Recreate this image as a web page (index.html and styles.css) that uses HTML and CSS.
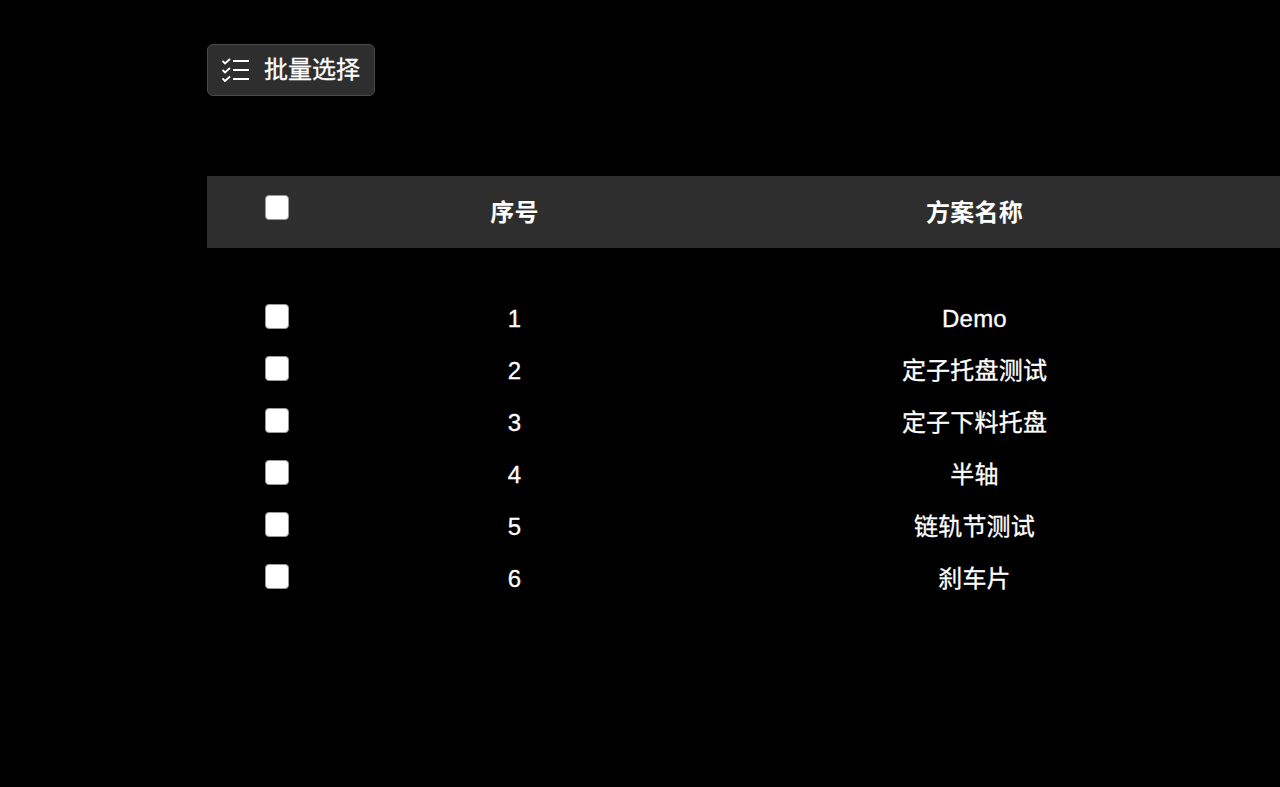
FILE: index.html
```html
<!DOCTYPE html>
<html lang="zh-CN">

<head>
    <meta charset="UTF-8">
    <title>方案列表</title>
    <link rel="stylesheet" href="styles.css">
</head>

<body>
    <main class="page">
        <button class="batch-btn">
            <svg class="batch-icon" width="28" height="24" viewBox="0 0 28 24" fill="none" stroke="#fff">
                <path d="M.5 3l2.5 2.5L8 1" stroke-width="1.9" />
                <path d="M.5 12l2.5 2.5L8 10" stroke-width="1.9" />
                <path d="M.5 20.5l2.5 2.5L8 18.5" stroke-width="1.9" />
                <path d="M11 3h16M11 12h16M11 21h16" stroke-width="2" />
            </svg>
            <span class="batch-label">批量选择</span>
        </button>

        <section class="plans">
            <div class="row head">
                <span class="check"></span>
                <span class="cell">序号</span>
                <span class="cell">方案名称</span>
            </div>
            <div class="row">
                <span class="check"></span>
                <span class="cell">1</span>
                <span class="cell">Demo</span>
            </div>
            <div class="row">
                <span class="check"></span>
                <span class="cell">2</span>
                <span class="cell">定子托盘测试</span>
            </div>
            <div class="row">
                <span class="check"></span>
                <span class="cell">3</span>
                <span class="cell">定子下料托盘</span>
            </div>
            <div class="row">
                <span class="check"></span>
                <span class="cell">4</span>
                <span class="cell">半轴</span>
            </div>
            <div class="row">
                <span class="check"></span>
                <span class="cell">5</span>
                <span class="cell">链轨节测试</span>
            </div>
            <div class="row">
                <span class="check"></span>
                <span class="cell">6</span>
                <span class="cell">刹车片</span>
            </div>
        </section>
    </main>
</body>

</html>
```

FILE: styles.css
```css
html,
body {
    margin: 0;
    height: 100%;
    background-color: #000;
    overflow: hidden;
}

body {
    color: #fff;
    font-family: "Liberation Sans", "Noto Sans CJK SC", sans-serif;
    font-size: 24px;
    -webkit-text-stroke: .3px #fff;
}

.page {
    padding: 44px 0 0 207px;
}

.batch-btn {
    display: flex;
    align-items: center;
    gap: 14px;
    box-sizing: border-box;
    width: 168px;
    height: 52px;
    padding: 0 0 0 14px;
    background-color: #2e2e2e;
    border: 1px solid #4a4a4a;
    border-radius: 6px;
    color: #fff;
    font: inherit;
}

.batch-label {
    margin-top: -6px;
}

.plans {
    margin-top: 80px;
    width: 1073px;
}

.row {
    display: grid;
    grid-template-columns: 140px 334px 586px 13px;
    align-items: center;
    justify-items: center;
    height: 52px;
    line-height: 52px;
}

.cell {
    padding: 1px 0 0 1px;
    letter-spacing: .2px;
}

.head {
    height: 72px;
    margin-bottom: 44px;
    background-color: #2e2e2e;
    font-weight: bold;
    -webkit-text-stroke: 0;
}

.check {
    box-sizing: border-box;
    width: 24px;
    height: 25px;
    margin-top: -4px;
    background-color: #fff;
    border: 1px solid #999;
    border-radius: 4px;
}

.head .check {
    margin-top: -10px;
}
```
